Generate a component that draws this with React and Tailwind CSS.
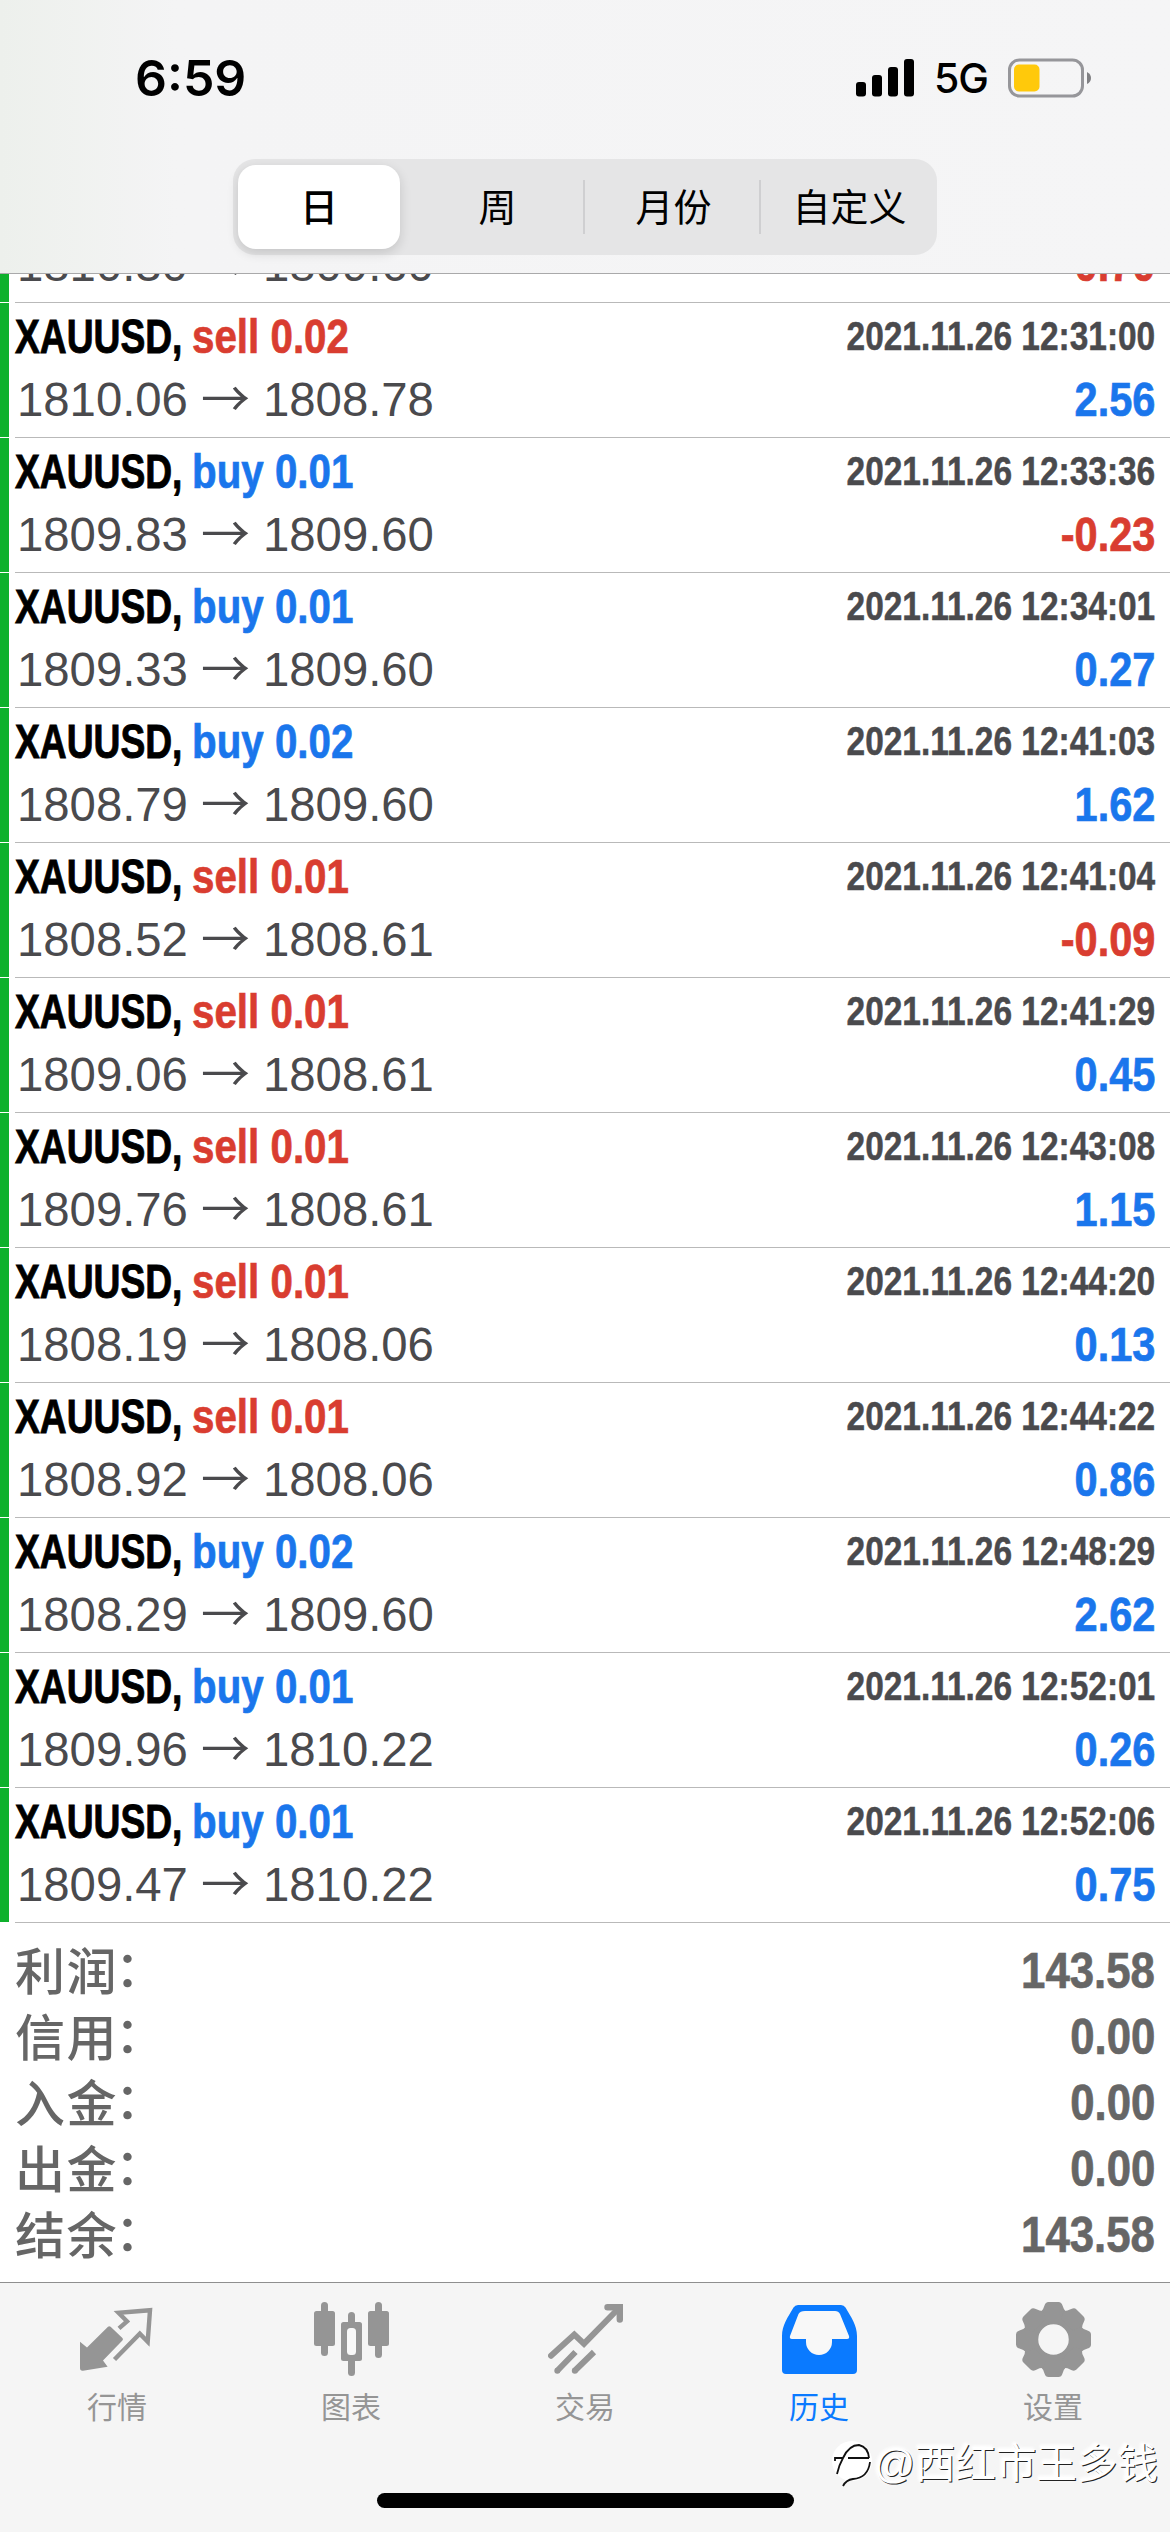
import React, { useState } from 'react'

const trades = [
  { side: 'sell', lots: '0.02', open: '1810.06', close: '1808.78', time: '2021.11.26 12:31:00', profit: '2.56' },
  { side: 'buy', lots: '0.01', open: '1809.83', close: '1809.60', time: '2021.11.26 12:33:36', profit: '-0.23' },
  { side: 'buy', lots: '0.01', open: '1809.33', close: '1809.60', time: '2021.11.26 12:34:01', profit: '0.27' },
  { side: 'buy', lots: '0.02', open: '1808.79', close: '1809.60', time: '2021.11.26 12:41:03', profit: '1.62' },
  { side: 'sell', lots: '0.01', open: '1808.52', close: '1808.61', time: '2021.11.26 12:41:04', profit: '-0.09' },
  { side: 'sell', lots: '0.01', open: '1809.06', close: '1808.61', time: '2021.11.26 12:41:29', profit: '0.45' },
  { side: 'sell', lots: '0.01', open: '1809.76', close: '1808.61', time: '2021.11.26 12:43:08', profit: '1.15' },
  { side: 'sell', lots: '0.01', open: '1808.19', close: '1808.06', time: '2021.11.26 12:44:20', profit: '0.13' },
  { side: 'sell', lots: '0.01', open: '1808.92', close: '1808.06', time: '2021.11.26 12:44:22', profit: '0.86' },
  { side: 'buy', lots: '0.02', open: '1808.29', close: '1809.60', time: '2021.11.26 12:48:29', profit: '2.62' },
  { side: 'buy', lots: '0.01', open: '1809.96', close: '1810.22', time: '2021.11.26 12:52:01', profit: '0.26' },
  { side: 'buy', lots: '0.01', open: '1809.47', close: '1810.22', time: '2021.11.26 12:52:06', profit: '0.75' },
]

// last line of the row that is scrolled under the header
const scrolledTrade = { open: '1810.30', close: '1809.60', profit: '-0.70' }

const summary = [
  { label: '利润', value: '143.58' },
  { label: '信用', value: '0.00' },
  { label: '入金', value: '0.00' },
  { label: '出金', value: '0.00' },
  { label: '结余', value: '143.58' },
]

const periods = ['日', '周', '月份', '自定义']

const QuotesIcon = () => (
  <svg className="w-[75px] h-[75px]" viewBox="0 0 75 75" fill="none">
    <path d="M0 39.7L7 45.6L28 24.8Q29.3 23.6 30.6 24.8L42.4 36Q43.6 37.3 42.4 38.6L23 58.6L27.6 64.8L3 68.7Q0 69 0 66Z" fill="currentColor" />
    <path d="M39 26.3L47 19.3L38.5 10.7L70 8.2L67.7 39.8L59.8 31.7L34.5 57.5" stroke="currentColor" strokeWidth="4.4" />
  </svg>
)

const ChartIcon = () => (
  <svg className="w-[75px] h-[75px]" viewBox="0 0 75 75" fill="currentColor">
    <rect x="7" y="0" width="7" height="54" rx="3.5" />
    <rect x="0" y="9" width="21" height="35" rx="2.5" />
    <rect x="61" y="0" width="7" height="56" rx="3.5" />
    <rect x="54" y="9" width="21" height="35" rx="2.5" />
    <rect x="34" y="10" width="7" height="64" rx="3.5" />
    <rect x="27" y="20" width="21" height="39" rx="2.5" />
    <rect x="33" y="26" width="9" height="27" rx="3.5" fill="#f8f8f8" />
  </svg>
)

const TradeIcon = () => (
  <svg className="w-[75px] h-[75px]" viewBox="0 0 75 75" fill="none" stroke="currentColor" strokeWidth="6">
    <path d="M3 53.7L26.3 32.5L36 41.7L71 6" strokeLinecap="round" strokeLinejoin="miter" />
    <path d="M59.5 5.2H71.8V17.5" strokeWidth="6.4" strokeLinecap="round" />
    <path d="M9 69L27.5 50M26.5 69L46 50" />
    <circle cx="9.3" cy="68.7" r="3" fill="currentColor" stroke="none" />
    <circle cx="26.8" cy="68.7" r="3" fill="currentColor" stroke="none" />
  </svg>
)

const HistoryIcon = () => (
  <svg className="w-[75px] h-[75px]" viewBox="0 0 75 75">
    <path d="M16 3H59Q62 3 63.5 5.5C69 15 75 23 75 34V68Q75 72 71 72H4Q0 72 0 68V34C0 23 6 15 11.5 5.5Q13 3 16 3Z" fill="currentColor" />
    <path d="M23 9H53Q56.5 9 58 12L67 34Q67.8 37 65 37H50V40A13 13 0 0 1 24 40V37H10Q7.2 37 8 34L16.5 12Q18 9 23 9Z" fill="#f8f8f8" />
  </svg>
)

const SettingsIcon = () => (
  <svg className="w-[75px] h-[75px]" viewBox="-37.5 -37.5 75 75" fill="currentColor">
    <circle r="23" fill="none" stroke="currentColor" strokeWidth="15.5" />
    {[0, 45, 90, 135, 180, 225, 270, 315].map((angle) => (
      <path
        key={angle}
        transform={`rotate(${angle})`}
        d="M-13 -27Q-10 -30 -9 -34Q-8 -37.5 -5 -37.5H5Q8 -37.5 9 -34Q10 -30 13 -27L9 -20H-9Z"
      />
    ))}
  </svg>
)

const tabs = [
  { label: '行情', Icon: QuotesIcon },
  { label: '图表', Icon: ChartIcon },
  { label: '交易', Icon: TradeIcon },
  { label: '历史', Icon: HistoryIcon },
  { label: '设置', Icon: SettingsIcon },
]

const StatusBar = () => (
  <div className="flex items-start justify-between h-[159px] pl-[135px] pr-[78px] pt-[48px]">
    <span className="font-['Inter'] font-semibold text-[50px] leading-[60px] text-black">6:59</span>
    <div className="flex items-center h-[60px]">
      <svg className="w-[59px] h-[38px]" viewBox="0 0 59 38">
        <rect x="0" y="23" width="10" height="14.5" rx="3" />
        <rect x="16" y="16" width="10" height="21.5" rx="3" />
        <rect x="32" y="8" width="10" height="29.5" rx="3" />
        <rect x="48" y="0" width="10" height="37.5" rx="3" />
      </svg>
      <span className="w-[75px] pl-[19px] whitespace-nowrap font-['Inter'] font-medium text-[41px] leading-[60px] tracking-[-1px] text-black">5G</span>
      <svg className="ml-[18px] w-[84px] h-[40px]" viewBox="0 0 84 40">
        <rect x="1.5" y="2" width="73" height="36" rx="10" fill="none" stroke="#96969a" strokeWidth="3" />
        <rect x="6" y="6.5" width="25.5" height="27" rx="5" fill="#ffc90b" />
        <path d="M79 14Q83 16 83 20Q83 24 79 26Z" fill="#808083" />
      </svg>
    </div>
  </div>
)

const PeriodSwitch = () => {
  const [active, setActive] = useState(0)

  return (
    <div className="mx-auto grid grid-cols-4 w-[704px] h-[96px] rounded-[22px] bg-[#e5e5e6]">
      {periods.map((period, i) => (
        <button
          key={period}
          onClick={() => setActive(i)}
          className="flex items-center text-[38px] font-['Noto_Sans_CJK_SC',sans-serif] text-black"
        >
          <span
            className={
              i === active
                ? 'ml-[5px] w-[162px] h-[84px] leading-[80px] rounded-[18px] bg-white font-medium shadow-[0_4px_12px_rgba(0,0,0,0.14)]'
                : 'w-[174px] h-[84px] pl-[3px] leading-[80px]'
            }
          >
            {period}
          </span>
          {i > active && i < periods.length - 1 && <span className="w-[2px] h-[54px] bg-[#cfcfd1]" />}
        </button>
      ))}
    </div>
  )
}

const TradeTitle = ({ trade }) => (
  <div className="flex justify-between h-[48px] font-bold">
    <div className="flex text-[48px] leading-[48px]">
      <span className="w-[177px] whitespace-nowrap origin-left scale-x-[0.775] text-black [-webkit-text-stroke:0.9px]">XAUUSD,</span>
      <span
        className={`whitespace-nowrap origin-left scale-x-[0.84] [-webkit-text-stroke:0.7px] ${trade.side === 'buy' ? 'text-[#1a76ec]' : 'text-[#d93d30]'}`}
      >
        {trade.side} {trade.lots}
      </span>
    </div>
    <span className="origin-right scale-x-[0.836] text-[40px] leading-[46px] text-[#4a4a4d] [-webkit-text-stroke:0.5px]">{trade.time}</span>
  </div>
)

const TradePrices = ({ trade }) => (
  <div className="flex justify-between h-[48px] text-[48px] leading-[48px]">
    <div className="flex text-[#4a4a4d]">
      <span className="ml-[2px] w-[184px] origin-left scale-x-[0.985]">{trade.open}</span>
      <span className="-mt-[4px] w-[62px] font-['Noto_Sans_CJK_SC'] text-[49px]">→</span>
      <span className="origin-left scale-x-[0.985]">{trade.close}</span>
    </div>
    <span
      className={`origin-right scale-x-[0.865] font-bold [-webkit-text-stroke:0.7px] ${trade.profit.startsWith('-') ? 'text-[#d93d30]' : 'text-[#1a76ec]'}`}
    >
      {trade.profit}
    </span>
  </div>
)

const TradeRow = ({ trade }) => (
  <div className="flex h-[135px]">
    <div className="w-[9px] h-[134px] bg-[#0eb12c]" />
    <div className="ml-[6px] flex-1 flex flex-col gap-[15px] pr-[15px] pt-[10px] border-b border-[#b9b9b9]">
      <TradeTitle trade={trade} />
      <TradePrices trade={trade} />
    </div>
  </div>
)

const Watermark = () => (
  <div className="absolute left-[832px] top-[2432px] flex items-center h-[64px] text-white">
    <svg className="w-[42px] h-[50px]" viewBox="0 0 42 50" fill="none">
      <circle cx="20" cy="22" r="20" fill="#fff" />
      <path d="M3 22V19H11Q17 6 27 6Q36 8 37 19M11 19Q7 26 5 35M16 19H37M38 23Q36 39 21 40Q14 41 11 47" stroke="#111" strokeWidth="1.8" />
    </svg>
    <span className="whitespace-nowrap text-[40.5px] leading-[64px] font-['Liberation_Sans','Noto_Sans_CJK_SC',sans-serif] [text-shadow:1px_1px_0_#222,-1px_-1px_3px_#fff,0_0_5px_#fff]">
      @西红市王多钱
    </span>
  </div>
)

export default function App() {
  const [activeTab, setActiveTab] = useState('历史')

  return (
    <div className="relative w-[1170px] h-[2532px] overflow-hidden flex flex-col bg-white font-['Liberation_Sans','Noto_Sans_CJK_SC',sans-serif]">
      <header className="h-[274px] shrink-0 border-b border-[#a9a9aa] bg-linear-to-r from-[#edf0ec] via-[#f4f4f5] via-15% to-[#f5f5f6]">
        <StatusBar />
        <PeriodSwitch />
      </header>

      <main className="h-[2008px] shrink-0">
        <div className="flex h-[29px] overflow-hidden">
          <div className="w-[9px] h-[28px] bg-[#0eb12c]" />
          <div className="ml-[6px] flex-1 flex flex-col justify-end pr-[15px] pb-[13px] border-b border-[#b9b9b9]">
            <TradePrices trade={scrolledTrade} />
          </div>
        </div>
        {trades.map((trade) => (
          <TradeRow key={trade.time} trade={trade} />
        ))}

        <div className="pt-[12px] pl-[15px] pr-[15px] text-[#666666]">
          {summary.map((item) => (
            <div key={item.label} className="flex justify-between h-[66px] leading-[66px] text-[50px]">
              <div className="flex font-['Noto_Sans_CJK_SC',sans-serif] font-medium">
                <span className="w-[100px] whitespace-nowrap tracking-[1.5px]">{item.label}</span>
                <span className="-mt-[3px]">：</span>
              </div>
              <span className="pt-[3px] font-bold origin-right scale-x-[0.875] [-webkit-text-stroke:0.7px]">{item.value}</span>
            </div>
          ))}
        </div>
      </main>

      <nav className="flex-1 flex flex-col border-t border-[#8f8f8f] bg-[#f5f5f5]">
        <div className="grid grid-cols-5 pt-[19px]">
          {tabs.map(({ label, Icon }) => (
            <button
              key={label}
              onClick={() => setActiveTab(label)}
              className={`flex flex-col items-center ${label === activeTab ? 'text-[#0a7aff]' : 'text-[#959595]'}`}
            >
              <Icon />
              <span className="mt-[8px] text-[30px] leading-[40px] font-['Noto_Sans_CJK_SC',sans-serif]">{label}</span>
            </button>
          ))}
        </div>
        <div className="mx-auto mt-auto mb-[24px] w-[417px] h-[15px] rounded-full bg-black" />
      </nav>

      <Watermark />
    </div>
  )
}
